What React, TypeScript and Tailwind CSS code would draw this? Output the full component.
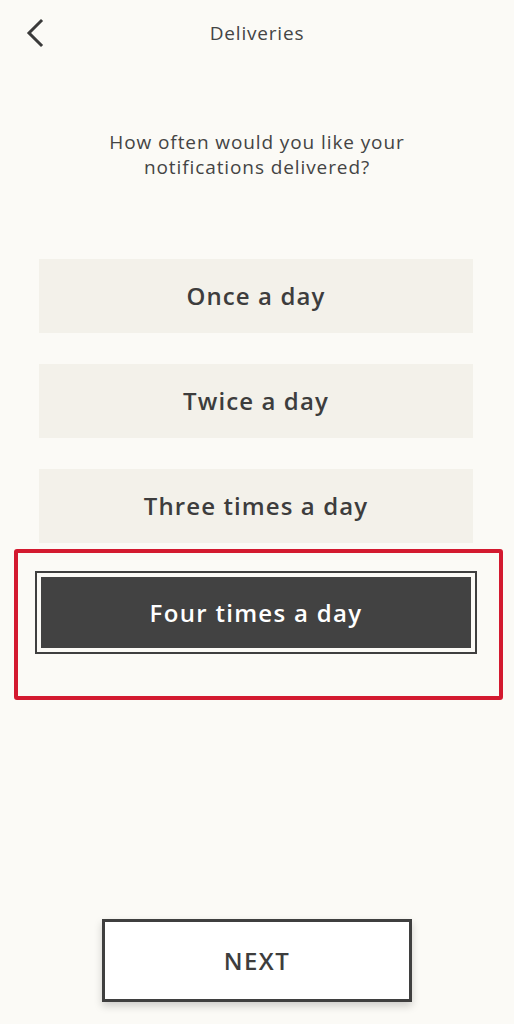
import React, { useState } from 'react';

const OPTIONS = ['Once a day', 'Twice a day', 'Three times a day', 'Four times a day'];

export default function App() {
  const [selected, setSelected] = useState(3);

  return (
    <div
      className="min-h-[1024px] w-full bg-[#fbfaf6] flex flex-col text-[#3f3f3f]"
      style={{ fontFamily: '"Open Sans", "Liberation Sans", sans-serif' }}>

      {/* Header */}
      <header className="relative h-[66px] flex items-center justify-center">
        <button className="absolute left-[22px] top-[17px] text-[#3a3a3a]" aria-label="Back">
          <svg width="26" height="32" viewBox="0 0 26 32" fill="none" stroke="currentColor" strokeWidth="3" strokeLinecap="square">
            <path d="M19 4 L7 16 L19 28" />
          </svg>
        </button>
        <h1 className="text-[19px] tracking-[0.8px] text-[#444]">Deliveries</h1>
      </header>

      <p className="mt-[64px] text-center text-[19px] leading-[25px] tracking-[0.9px] text-[#444]">
        How often would you like your
        <br />
        notifications delivered?
      </p>

      {/* Options */}
      <div className="mt-[79px] flex flex-col gap-[31px]">
        {OPTIONS.map((label, i) =>
          i === selected ?
          <div key={label} className="ml-[14px] mr-[11px] -mt-[25px] border-4 border-[#d3192f] rounded-[3px] pl-[17px] pr-[22px] pt-[18px] pb-[42px]">
              <button
              onClick={() => setSelected(i)}
              className="w-full h-[83px] border-2 border-[#3f3f3f] p-[4px] bg-[#fbfaf6]">
                <span className="flex h-full w-full items-center justify-center bg-[#424242] text-white text-[24px] font-semibold tracking-[1.3px]">
                  {label}
                </span>
              </button>
            </div> :

          <button
            key={label}
            onClick={() => setSelected(i)}
            className="ml-[39px] mr-[41px] h-[74px] bg-[#f3f1ea] text-[24px] font-semibold tracking-[1.1px] text-[#3d3d3d]">
              {label}
            </button>
        )}
      </div>

      {/* Next */}
      <div className="mt-auto flex justify-center pb-[22px]">
        <button className="w-[310px] h-[83px] bg-white border-[3px] border-[#3f3f3f] shadow-[0_4px_8px_rgba(0,0,0,0.18)] text-[24px] font-semibold tracking-[1.5px] text-[#3d3d3d]">
          NEXT
        </button>
      </div>
    </div>);

}
